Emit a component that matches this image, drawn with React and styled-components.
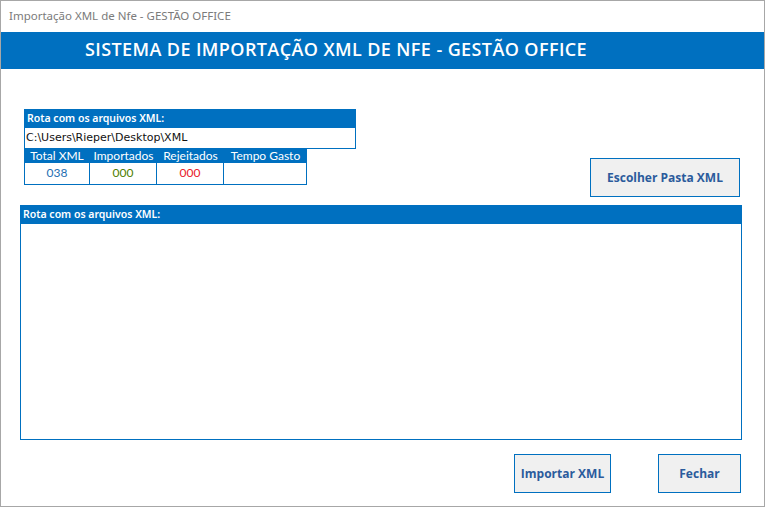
import React from 'react';
import styled, { createGlobalStyle } from 'styled-components';

const Global = createGlobalStyle`
  html, body { margin: 0; padding: 0; background: #fff; }
  * { box-sizing: border-box; }
`;

const BLUE = '#0070c0';

const Window = styled.div`
  width: 765px;
  height: 507px;
  border: 1px solid #a7a7a7;
  background: #fff;
  display: flex;
  flex-direction: column;
  font-family: "DejaVu Sans", sans-serif;
`;

const TitleBar = styled.div`
  height: 31px;
  padding: 7px 0 0 8px;
  font-family: "Noto Sans", sans-serif;
  font-size: 11.5px;
  color: #7b7b7b;
`;

const Banner = styled.div`
  height: 37px;
  background: ${BLUE};
  color: #fff;
  font-family: "Open Sans", sans-serif;
  font-size: 18px;
  font-weight: 600;
  padding: 5px 0 0 84px;
  letter-spacing: 0.4px;
`;

const Content = styled.div`
  display: flex;
  flex-direction: column;
  padding: 40px 0 0 19px;
  width: 740px;
`;

const TopRow = styled.div`
  display: flex;
  align-items: flex-start;
`;

const LeftBlock = styled.div`
  margin-left: 4px;
  display: flex;
  flex-direction: column;
`;

const BarLabel = styled.div`
  height: 19px;
  background: ${BLUE};
  color: #fff;
  font-family: "Noto Sans", sans-serif;
  font-weight: 600;
  font-size: 10.5px;
  line-height: 19px;
  padding-left: 3px;
`;

const RouteBox = styled.div`
  width: 332px;
`;

const PathField = styled.div`
  height: 21px;
  border: 1px solid ${BLUE};
  border-top: none;
  font-size: 11px;
  line-height: 20px;
  padding-left: 1px;
  color: #111;
`;

const Stats = styled.div`
  display: grid;
  grid-template-columns: 66px 67px 67px 83px;
  width: 283px;
  font-family: Lato, sans-serif;
  font-size: 12px;
`;

const StatHead = styled.div`
  height: 14px;
  background: ${BLUE};
  color: #fff;
  line-height: 14px;
  text-align: center;
`;

const StatCell = styled.div`
  height: 22px;
  border: 1px solid ${BLUE};
  border-top: none;
  border-left-width: ${p => (p.$first ? 1 : 0)}px;
  line-height: 20px;
  text-align: center;
  color: ${p => p.$color || '#111'};
`;

const Button = styled.button`
  width: ${p => p.$w}px;
  height: 39px;
  background: #f0f0f0;
  border: 1px solid ${BLUE};
  border-radius: 0;
  color: #2b5b9c;
  font-family: "Open Sans", sans-serif;
  font-weight: 700;
  font-size: 12px;
  padding: 0;
  cursor: pointer;
`;

const PickButton = styled(Button)`
  margin-left: auto;
  margin-right: 1px;
  margin-top: 49px;
`;

const LogPanel = styled.div`
  margin-top: 8px;
  width: 722px;
  display: flex;
  flex-direction: column;
`;

const LogArea = styled.div`
  height: 216px;
  border: 1px solid ${BLUE};
  border-top: none;
`;

const Actions = styled.div`
  display: flex;
  justify-content: flex-end;
  gap: 47px;
  margin-top: 14px;
  width: 721px;
`;

const stats = [
  { label: 'Total XML', value: '038', color: '#1f6fb2' },
  { label: 'Importados', value: '000', color: '#4e7f00' },
  { label: 'Rejeitados', value: '000', color: '#e8202a' },
  { label: 'Tempo Gasto', value: '' },
];

export default function App() {
  return (
    <>
      <Global />
      <Window>
        <TitleBar>Importação XML de Nfe - GESTÃO OFFICE</TitleBar>
        <Banner>SISTEMA DE IMPORTAÇÃO XML DE NFE - GESTÃO OFFICE</Banner>
        <Content>
          <TopRow>
            <LeftBlock>
              <RouteBox>
                <BarLabel>Rota com os arquivos XML:</BarLabel>
                <PathField>C:\Users\Rieper\Desktop\XML</PathField>
              </RouteBox>
              <Stats>
                {stats.map(s => (
                  <StatHead key={s.label}>{s.label}</StatHead>
                ))}
                {stats.map((s, i) => (
                  <StatCell key={s.label} $first={i === 0} $color={s.color}>
                    {s.value}
                  </StatCell>
                ))}
              </Stats>
            </LeftBlock>
            <PickButton $w={150}>Escolher Pasta XML</PickButton>
          </TopRow>
          <LogPanel>
            <BarLabel>Rota com os arquivos XML:</BarLabel>
            <LogArea />
          </LogPanel>
          <Actions>
            <Button $w={97}>Importar XML</Button>
            <Button $w={83}>Fechar</Button>
          </Actions>
        </Content>
      </Window>
    </>
  );
}
